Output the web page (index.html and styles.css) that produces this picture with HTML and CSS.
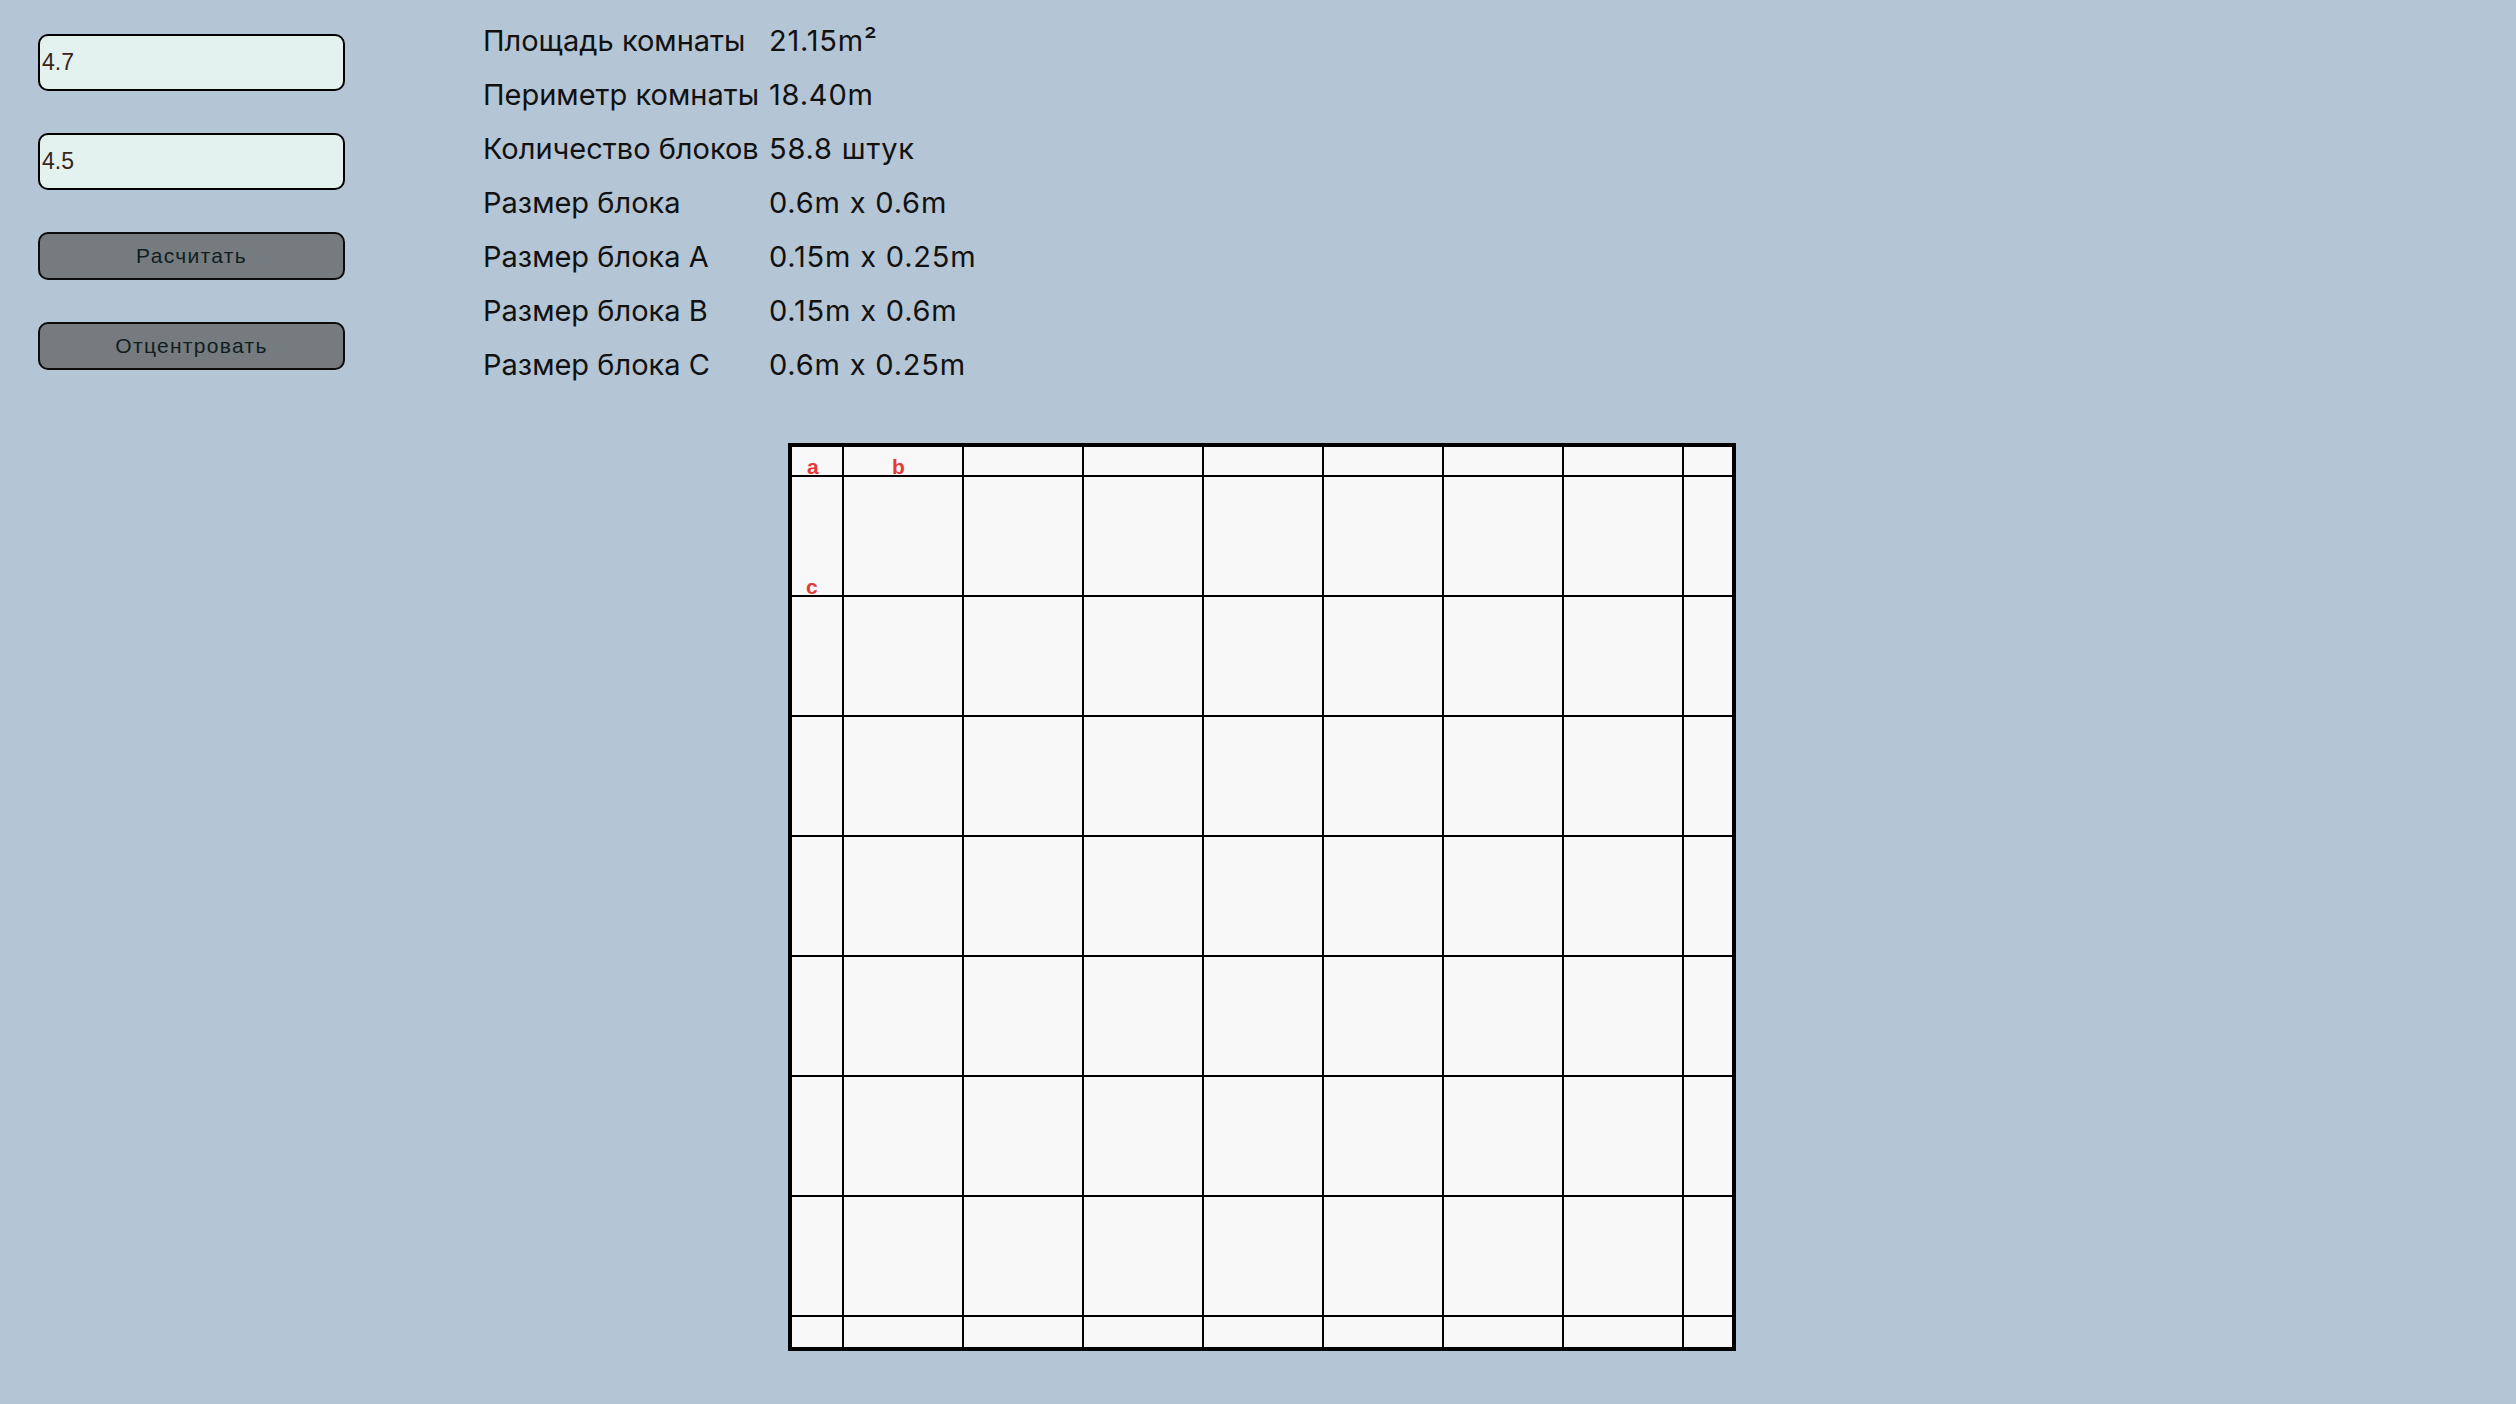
FILE: index.html
```html
<!DOCTYPE html>
<html lang="ru">
<head>
<meta charset="utf-8">
<title>Калькулятор плитки</title>
<link rel="stylesheet" href="styles.css">
</head>
<body>
<div class="app">
  <aside class="sidebar">
    <input class="field" type="text" value="4.7">
    <input class="field" type="text" value="4.5">
    <button class="btn">Расчитать</button>
    <button class="btn">Отцентровать</button>
  </aside>
  <main class="main">
    <div class="info">
      <span>Площадь комнаты</span><span class="val">21.15m²</span>
      <span>Периметр комнаты</span><span class="val">18.40m</span>
      <span>Количество блоков</span><span class="val">58.8 штук</span>
      <span>Размер блока</span><span class="val">0.6m x 0.6m</span>
      <span>Размер блока A</span><span class="val">0.15m x 0.25m</span>
      <span>Размер блока B</span><span class="val">0.15m x 0.6m</span>
      <span>Размер блока C</span><span class="val">0.6m x 0.25m</span>
    </div>
    <div class="room">
      <svg class="plan" width="940" height="900" viewBox="0 0 940 900">
        <g class="lines">
          <rect x="50" y="0" width="2" height="900"/>
          <rect x="170" y="0" width="2" height="900"/>
          <rect x="290" y="0" width="2" height="900"/>
          <rect x="410" y="0" width="2" height="900"/>
          <rect x="530" y="0" width="2" height="900"/>
          <rect x="650" y="0" width="2" height="900"/>
          <rect x="770" y="0" width="2" height="900"/>
          <rect x="890" y="0" width="2" height="900"/>
          <rect x="0" y="28" width="940" height="2"/>
          <rect x="0" y="148" width="940" height="2"/>
          <rect x="0" y="268" width="940" height="2"/>
          <rect x="0" y="388" width="940" height="2"/>
          <rect x="0" y="508" width="940" height="2"/>
          <rect x="0" y="628" width="940" height="2"/>
          <rect x="0" y="748" width="940" height="2"/>
          <rect x="0" y="868" width="940" height="2"/>
        </g>
        <text class="mark" x="15" y="27">a</text>
        <text class="mark" x="100" y="27">b</text>
        <text class="mark" x="14" y="147">c</text>
      </svg>
    </div>
  </main>
</div>
</body>
</html>
```

FILE: styles.css
```css
html, body {
  margin: 0;
  padding: 0;
}

body {
  background: #b4c5d5;
  font-family: "Liberation Sans", Arial, sans-serif;
  color: #111;
}

.app {
  display: flex;
  align-items: flex-start;
}

.sidebar {
  width: 307px;
  margin-left: 38px;
  padding-top: 34px;
  display: flex;
  flex-direction: column;
  gap: 42px;
}

.field {
  box-sizing: border-box;
  width: 307px;
  height: 57px;
  margin: 0;
  padding: 1px 2px;
  border: 2px solid #000;
  border-radius: 10px;
  background: #e4f2ef;
  color: #3b2418;
  font-family: "Liberation Sans", Arial, sans-serif;
  font-size: 23px;
  outline: none;
}

.btn {
  box-sizing: border-box;
  width: 307px;
  height: 48px;
  margin: 0;
  padding: 0;
  border: 2px solid #0c0c0c;
  border-radius: 10px;
  background: #767b80;
  color: #0f1e1e;
  font-family: "Liberation Sans", Arial, sans-serif;
  font-size: 21px;
  letter-spacing: 1.3px;
}

.main {
  margin-left: 138px;
  padding-top: 14px;
}

.info {
  display: grid;
  grid-template-columns: auto auto;
  justify-content: start;
  column-gap: 10px;
  font-family: Inter, "Noto Sans", sans-serif;
  font-size: 29px;
  line-height: 54px;
  color: #111;
}

.val {
  letter-spacing: 0.8px;
}

.room {
  margin-top: 51px;
  margin-left: 305px;
  width: 940px;
  height: 900px;
  border: 4px solid #000;
  background: #f8f8f8;
}

.plan {
  display: block;
}

.lines rect {
  fill: #000;
}

.mark {
  fill: #e53935;
  font-family: "Liberation Sans", Arial, sans-serif;
  font-size: 21px;
  font-weight: bold;
}
```
